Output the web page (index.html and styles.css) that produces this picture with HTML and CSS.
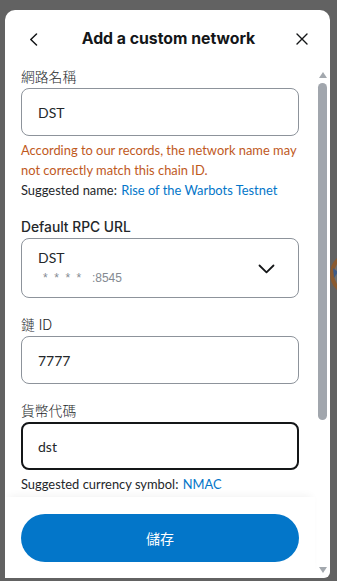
FILE: index.html
```html
<!DOCTYPE html>
<html>
<head>
<meta charset="utf-8">
<link rel="stylesheet" href="styles.css">
</head>
<body>
<div class="backdrop">
  <div class="behind">
    <svg width="10" height="60" viewBox="0 0 10 60"><circle cx="22" cy="30" r="20" fill="#6f7072" stroke="#8a5a30" stroke-width="4"/><path d="M3 24 L8 28 L4 34 Z" fill="#3e5a86"/></svg>
  </div>
  <div class="modal">
    <div class="header">
      <div class="hd-left">
        <svg class="icon-back" width="9" height="13" viewBox="0 0 9 13"><path d="M7.5 1 L1.8 6.5 L7.5 12" fill="none" stroke="#141618" stroke-width="1.5" stroke-linecap="round" stroke-linejoin="round"/></svg>
      </div>
      <h1 class="title">Add a custom network</h1>
      <div class="hd-right">
        <svg class="icon-close" width="12" height="12" viewBox="0 0 12 12"><path d="M1 1 L11 11 M11 1 L1 11" fill="none" stroke="#141618" stroke-width="1.4" stroke-linecap="round"/></svg>
      </div>
    </div>
    <div class="body">
      <div class="main">
        <div class="scroll">
          <div class="field">
            <div class="label cjk">網路名稱</div>
            <input class="input" type="text" value="DST">
            <p class="helper warn">According to our records, the network name may not correctly match this chain ID.</p>
            <p class="helper">Suggested name: <span class="link">Rise of the Warbots Testnet</span></p>
          </div>
          <div class="field">
            <div class="label">Default RPC URL</div>
            <div class="select">
              <div class="select-text">
                <div class="select-name">DST</div>
                <div class="select-url"><span class="stars">* * * *</span><span>:8545</span></div>
              </div>
              <svg class="chev" width="17" height="10" viewBox="0 0 17 10"><path d="M1.5 1.5 L8.5 8.3 L15.5 1.5" fill="none" stroke="#141618" stroke-width="1.8" stroke-linecap="round" stroke-linejoin="round"/></svg>
            </div>
          </div>
          <div class="field">
            <div class="label cjk">鏈 ID</div>
            <input class="input" type="text" value="7777">
          </div>
          <div class="field">
            <div class="label cjk">貨幣代碼</div>
            <input class="input focused" type="text" value="dst">
            <p class="helper tight">Suggested currency symbol: <span class="link">NMAC</span></p>
          </div>
        </div>
        <div class="footer">
          <button class="save">儲存</button>
        </div>
      </div>
      <div class="scrollbar">
        <div class="arrow up"></div>
        <div class="track"><div class="thumb"></div></div>
        <div class="arrow down"></div>
      </div>
    </div>
  </div>
</div>
</body>
</html>
```
FILE: styles.css
```css
* { box-sizing: border-box; }
html, body { margin: 0; padding: 0; }
body {
  width: 337px;
  height: 581px;
  overflow: hidden;
  background: #626262;
  font-family: "Lato", "Noto Sans CJK TC", sans-serif;
  color: #24272a;
}
.backdrop {
  position: relative;
  height: 581px;
  padding: 10px 7px 3px 5px;
}
.behind {
  position: absolute;
  left: 330px;
  top: 244px;
  width: 10px;
  height: 60px;
}
.modal {
  width: 325px;
  height: 568px;
  background: #fff;
  border-radius: 10px 10px 6px 0;
  display: flex;
  flex-direction: column;
  overflow: hidden;
}
.header {
  height: 56px;
  flex: none;
  display: grid;
  grid-template-columns: 1fr auto 1fr;
  align-items: center;
  padding: 2px 22px 0 24px;
}
.hd-left { display: flex; justify-content: flex-start; }
.hd-right { display: flex; justify-content: flex-end; }
.icon-back, .icon-close { display: block; }
.title {
  margin: 0;
  font-family: "Inter", "Noto Sans CJK TC", sans-serif;
  font-weight: 700;
  font-size: 15.8px;
  line-height: 20px;
  color: #141618;
}
.body {
  flex: 1;
  min-height: 0;
  display: flex;
}
.main {
  flex: 1;
  min-width: 0;
  display: flex;
  flex-direction: column;
}
.scroll {
  flex: 1;
  min-height: 0;
  overflow: hidden;
  padding: 0 16px;
}
.field { margin-bottom: 16px; }
.label {
  font-family: "Inter", "Noto Sans CJK TC", sans-serif;
  font-weight: 500;
  font-size: 13.8px;
  line-height: 22px;
  color: #24272a;
}
.label.cjk { font-weight: 300; }
.input {
  display: block;
  width: 278px;
  height: 48px;
  margin: 0;
  border: 1px solid #8d939b;
  border-radius: 8px;
  padding: 0 16px;
  background: #fff;
  font-family: "Lato", sans-serif;
  font-size: 14px;
  color: #24272a;
  outline: none;
}
.input.focused {
  border: 2px solid #141618;
  padding: 0 15px;
}
.helper {
  margin: 0;
  font-size: 12.9px;
  line-height: 20px;
  width: 277px;
  color: #24272a;
}
.helper.warn { margin-top: 4px; color: #c0591d; }
.helper.tight { margin-top: 4px; }
.link { color: #0376c9; margin-left: 1px; }
.select {
  width: 278px;
  height: 60px;
  border: 1px solid #8d939b;
  border-radius: 8px;
  display: flex;
  align-items: center;
  justify-content: space-between;
  padding: 0 23px 0 16px;
}
.select-name {
  font-size: 14px;
  line-height: 20px;
  color: #24272a;
}
.select-url {
  font-family: "Liberation Sans", sans-serif;
  font-size: 12px;
  line-height: 20px;
  color: #848a92;
  padding-left: 5px;
  display: flex;
  gap: 9px;
}
.stars { letter-spacing: 1.6px; }
.chev { display: block; margin-top: 2px; }
.footer {
  position: relative;
  z-index: 1;
  flex: none;
  background: #fff;
  padding: 17px 16px 16px;
  box-shadow: 0 -5px 8px -4px rgba(0, 0, 0, 0.06);
}
.save {
  display: block;
  width: 278px;
  height: 48px;
  border: none;
  border-radius: 24px;
  background: #0376c9;
  color: #fff;
  font-family: "Noto Sans CJK TC", sans-serif;
  font-size: 14px;
  padding: 0;
}
.scrollbar {
  width: 15px;
  flex: none;
  display: flex;
  flex-direction: column;
  align-items: center;
  padding: 6px 0 5px;
}
.arrow {
  width: 0;
  height: 0;
  border-left: 4.5px solid transparent;
  border-right: 4.5px solid transparent;
}
.arrow.up { border-bottom: 6px solid #a3a8ae; }
.arrow.down { border-top: 6px solid #a3a8ae; }
.track {
  flex: 1;
  width: 100%;
  display: flex;
  justify-content: center;
  padding-top: 5px;
}
.thumb {
  width: 9px;
  height: 337px;
  border-radius: 5px;
  background: #a1a6ad;
}
```
